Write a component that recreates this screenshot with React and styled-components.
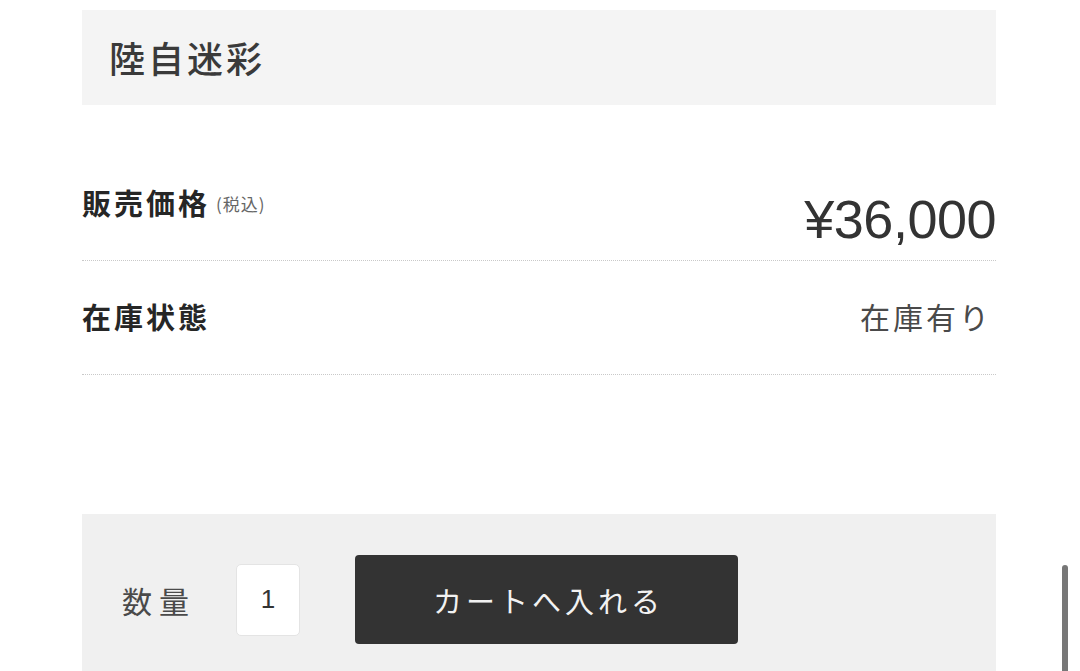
import React from 'react';
import styled, { createGlobalStyle } from 'styled-components';

const GlobalStyle = createGlobalStyle`
  html, body {
    margin: 0;
    padding: 0;
    background: #fff;
    overflow: hidden;
  }
  body {
    font-family: "Noto Sans CJK JP", "Liberation Sans", sans-serif;
    color: #333;
  }
`;

const Page = styled.div`
  position: relative;
  width: 1080px;
  height: 671px;
  overflow: hidden;
`;

const Content = styled.div`
  width: 914px;
  margin-left: 82px;
  padding-top: 10px;
`;

const TitleBox = styled.div`
  height: 95px;
  box-sizing: border-box;
  background: #f4f4f4;
  display: flex;
  align-items: center;
  padding-left: 27px;
  padding-bottom: 2px;
`;

const Title = styled.h1`
  margin: 0;
  font-size: 36px;
  line-height: 1;
  font-weight: 500;
  letter-spacing: 3px;
  color: #3a3a3a;
`;

const Row = styled.div`
  display: flex;
  justify-content: space-between;
  align-items: ${p => p.$align || 'flex-start'};
  padding: ${p => p.$pad};
  border-bottom: 1px dotted #c9c9c9;
`;

const Label = styled.div`
  font-size: 29px;
  line-height: 1;
  font-weight: 700;
  letter-spacing: 3px;
  color: #262626;
  display: flex;
  align-items: center;
`;

const Tax = styled.span`
  font-size: 17px;
  font-weight: 400;
  letter-spacing: 1px;
  color: #666;
  margin-left: 6px;
  margin-top: 2px;
`;

const Price = styled.div`
  font-family: "Liberation Sans", sans-serif;
  font-size: 54px;
  line-height: 1;
  margin-top: 4px;
  color: #333;
  letter-spacing: -0.5px;
`;

const Value = styled.div`
  font-size: 30px;
  line-height: 1;
  letter-spacing: 3px;
  color: #4a4a4a;
  margin-right: 4px;
`;

const CartBox = styled.div`
  margin-top: 139px;
  background: #f0f0f0;
  display: flex;
  align-items: center;
  padding: 41px 0 41px 40px;
`;

const QtyLabel = styled.span`
  font-size: 30px;
  line-height: 1;
  letter-spacing: 7px;
  color: #4a4a4a;
`;

const QtyInput = styled.div`
  width: 64px;
  height: 72px;
  margin-left: 40px;
  box-sizing: border-box;
  background: #fff;
  border: 1px solid #e4e4e4;
  border-radius: 5px;
  display: flex;
  align-items: center;
  justify-content: center;
  font-family: "Liberation Sans", sans-serif;
  font-size: 26px;
  color: #333;
`;

const CartButton = styled.button`
  width: 383px;
  height: 89px;
  margin-left: 55px;
  border: none;
  border-radius: 4px;
  background: #333333;
  color: #f2f2f2;
  font-family: "Noto Sans CJK JP", sans-serif;
  font-size: 29px;
  letter-spacing: 4px;
  padding: 0 0 0 4px;
  cursor: pointer;
`;

const ScrollThumb = styled.div`
  position: absolute;
  left: 1062px;
  top: 565px;
  width: 6px;
  height: 120px;
  border-radius: 3px;
  background: #777;
`;

export default function App() {
  return (
    <Page>
      <GlobalStyle />
      <Content>
        <TitleBox>
          <Title>陸自迷彩</Title>
        </TitleBox>

        <Row $pad="83px 0 14px 0">
          <Label>
            販売価格<Tax>(税込)</Tax>
          </Label>
          <Price>¥36,000</Price>
        </Row>

        <Row $align="center" $pad="40px 0 43px 0">
          <Label>在庫状態</Label>
          <Value>在庫有り</Value>
        </Row>

        <CartBox>
          <QtyLabel>数量</QtyLabel>
          <QtyInput>1</QtyInput>
          <CartButton>カートへ入れる</CartButton>
        </CartBox>
      </Content>
      <ScrollThumb />
    </Page>
  );
}
